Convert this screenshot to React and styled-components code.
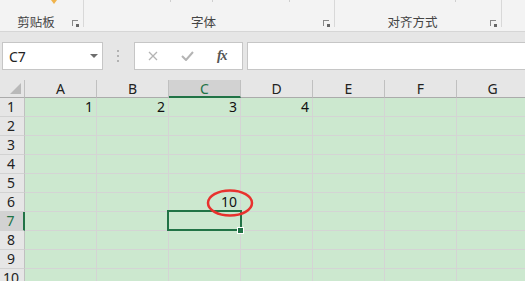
import React from 'react'
import styled, { createGlobalStyle } from 'styled-components'

const GlobalStyle = createGlobalStyle`
  html, body {
    margin: 0;
    padding: 0;
    width: 525px;
    height: 281px;
    overflow: hidden;
    background: #e6e6e6;
    font-family: "Noto Sans", "Noto Sans CJK SC", sans-serif;
  }
`

const Page = styled.div`
  display: flex;
  flex-direction: column;
  width: 525px;
  height: 281px;
  overflow: hidden;
`

const Ribbon = styled.div`
  display: flex;
  height: 31px;
  background: #f3f3f3;
  border-bottom: 1px solid #d6d6d6;
  position: relative;
`

const RibbonGroup = styled.div`
  display: flex;
  align-items: flex-end;
  width: ${p => p.width}px;
  flex: ${p => (p.width ? 'none' : 1)};
  height: 27px;
  border-right: ${p => (p.last ? 'none' : '1px solid #d8d8d8')};
  position: relative;
`

const GroupLabel = styled.div`
  flex: 1;
  text-align: center;
  font-family: "Noto Sans CJK SC", sans-serif;
  font-size: 12.5px;
  line-height: 14px;
  color: #444;
  margin-bottom: -2px;
`

const Launcher = styled.div`
  width: 6px;
  height: 6px;
  margin: 0 5px 1px 0;
  border-left: 1px solid #888;
  border-top: 1px solid #888;
  position: relative;
  box-sizing: border-box;
  &::after {
    content: '';
    position: absolute;
    right: -1px;
    bottom: -1px;
    width: 3px;
    height: 3px;
    background: #666;
  }
`

const TopTick = styled.div`
  position: absolute;
  top: 0;
  left: ${p => p.x}px;
  width: 1px;
  height: 2px;
  background: #cfcfcf;
`

const PasteTip = styled.div`
  position: absolute;
  top: 0;
  left: 51px;
  width: 0;
  height: 0;
  border-left: 3px solid transparent;
  border-right: 3px solid transparent;
  border-top: 4px solid #f0b34c;
`

const FormulaBar = styled.div`
  display: flex;
  align-items: center;
  height: 28px;
  padding: 10px 0 10px 2px;
`

const NameBox = styled.div`
  display: flex;
  align-items: center;
  justify-content: space-between;
  box-sizing: border-box;
  width: 101px;
  height: 28px;
  background: #fff;
  border: 1px solid #c6c6c6;
  padding: 0 4px 0 6px;
  font-size: 14px;
  color: #222;
`

const DropArrow = styled.div`
  width: 0;
  height: 0;
  border-left: 4px solid transparent;
  border-right: 4px solid transparent;
  border-top: 4px solid #6d6d6d;
`

const Grip = styled.div`
  display: flex;
  flex-direction: column;
  gap: 3px;
  width: 30px;
  align-items: center;
  span {
    width: 2px;
    height: 2px;
    background: #b2b2b2;
  }
`

const ButtonBox = styled.div`
  display: flex;
  align-items: center;
  justify-content: space-around;
  box-sizing: border-box;
  width: 109px;
  height: 28px;
  margin-left: 1px;
  background: #fff;
  border: 1px solid #c6c6c6;
  padding: 0 4px 0 2px;
`

const Fx = styled.span`
  font-family: "Liberation Serif", serif;
  font-style: italic;
  font-weight: bold;
  font-size: 14px;
  color: #555;
  letter-spacing: -1px;
`

const FormulaInput = styled.div`
  flex: 1;
  height: 28px;
  margin-left: 4px;
  box-sizing: border-box;
  background: #fff;
  border: 1px solid #c6c6c6;
  border-right: none;
`

const Sheet = styled.div`
  display: grid;
  grid-template-columns: 25px repeat(7, 72px);
  grid-auto-rows: 19px;
  grid-template-rows: 18px;
  background: #cce8cf;
  flex: 1;
  overflow: hidden;
`

const Corner = styled.div`
  background: #e6e6e6;
  border-right: 1px solid #c0c0c0;
  border-bottom: 1px solid #ababab;
  position: relative;
  &::after {
    content: '';
    position: absolute;
    right: 3px;
    bottom: 3px;
    width: 0;
    height: 0;
    border-left: 11px solid transparent;
    border-bottom: 11px solid #b9b9b9;
  }
`

const ColHeader = styled.div`
  background: ${p => (p.selected ? '#d2d2d2' : '#e6e6e6')};
  color: ${p => (p.selected ? '#217346' : '#222')};
  border-right: 1px solid #c0c0c0;
  border-bottom: ${p => (p.selected ? '2px solid #217346' : '1px solid #ababab')};
  font-size: 14px;
  line-height: 17px;
  text-align: center;
`

const RowHeader = styled.div`
  background: ${p => (p.selected ? '#d2d2d2' : '#e6e6e6')};
  color: ${p => (p.selected ? '#217346' : '#222')};
  border-right: ${p => (p.selected ? '2px solid #217346' : '1px solid #c0c0c0')};
  border-bottom: 1px solid #d2d2d2;
  font-size: 14px;
  line-height: 18px;
  text-align: center;
  padding-right: 2px;
`

const Cell = styled.div`
  position: relative;
  border-right: 1px solid #d4d4d4;
  border-bottom: 1px solid #d4d4d4;
  font-size: 14px;
  line-height: 18px;
  text-align: right;
  padding-right: 3px;
  color: #111;
  ${p =>
    p.active &&
    `
    &::after {
      content: '';
      position: absolute;
      inset: -2px -2px -1px -2px;
      border: 2px solid #217346;
      z-index: 2;
    }
    &::before {
      content: '';
      position: absolute;
      right: -4px;
      bottom: -4px;
      width: 5px;
      height: 5px;
      background: #217346;
      border: 1px solid #fff;
      z-index: 3;
    }
  `}
`

const Mark = styled.svg`
  position: absolute;
  right: -14px;
  top: -4px;
  z-index: 4;
  pointer-events: none;
`

const cols = ['A', 'B', 'C', 'D', 'E', 'F', 'G']

const values = {
  '1A': 1,
  '1B': 2,
  '1C': 3,
  '1D': 4,
  '6C': 10,
}

export default function App() {
  const rows = Array.from({ length: 10 }, (_, i) => i + 1)
  return (
    <Page>
      <GlobalStyle />
      <Ribbon>
        <PasteTip />
        <TopTick x={170} />
        <TopTick x={212} />
        <TopTick x={289} />
        <TopTick x={455} />
        <RibbonGroup width={83}>
          <GroupLabel>剪贴板</GroupLabel>
          <Launcher />
        </RibbonGroup>
        <RibbonGroup width={250}>
          <GroupLabel>字体</GroupLabel>
          <Launcher />
        </RibbonGroup>
        <RibbonGroup width={166}>
          <GroupLabel>对齐方式</GroupLabel>
          <Launcher />
        </RibbonGroup>
        <RibbonGroup last />
      </Ribbon>

      <FormulaBar>
        <NameBox>
          C7
          <DropArrow />
        </NameBox>
        <Grip>
          <span />
          <span />
          <span />
        </Grip>
        <ButtonBox>
          <svg width="10" height="10" viewBox="0 0 10 10">
            <path d="M1 1 L9 9 M9 1 L1 9" stroke="#b4b4b4" strokeWidth="1.3" />
          </svg>
          <svg width="13" height="10" viewBox="0 0 13 10">
            <path d="M1 5 L5 9 L12 1" stroke="#b4b4b4" strokeWidth="2" fill="none" />
          </svg>
          <Fx>fx</Fx>
        </ButtonBox>
        <FormulaInput />
      </FormulaBar>

      <Sheet>
        <Corner />
        {cols.map(c => (
          <ColHeader key={c} selected={c === 'C'}>
            {c}
          </ColHeader>
        ))}
        {rows.map(r => (
          <React.Fragment key={r}>
            <RowHeader selected={r === 7}>{r}</RowHeader>
            {cols.map(c => (
              <Cell key={c} active={r === 7 && c === 'C'}>
                {values[`${r}${c}`]}
                {r === 6 && c === 'C' && (
                  <Mark width="48" height="30" viewBox="0 0 48 30">
                    <ellipse cx="24" cy="14" rx="22" ry="12.5" fill="none" stroke="#e8322e" strokeWidth="2.5" />
                  </Mark>
                )}
              </Cell>
            ))}
          </React.Fragment>
        ))}
      </Sheet>
    </Page>
  )
}
